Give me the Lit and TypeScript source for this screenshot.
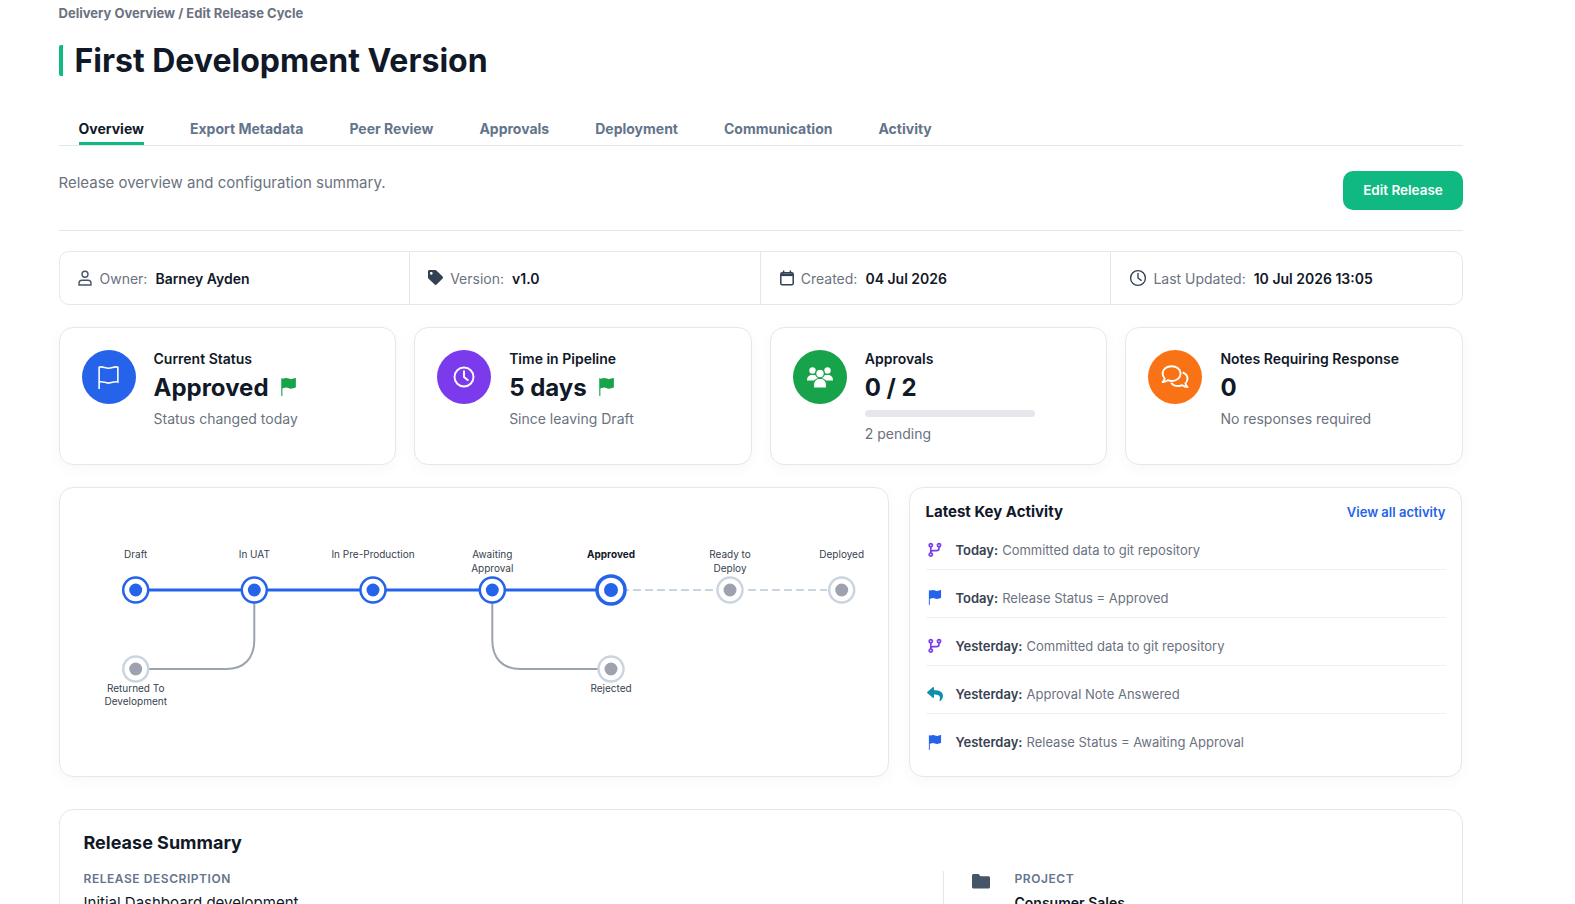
import { LitElement, html, css, svg } from 'lit';
import { customElement } from 'lit/decorators.js';

const FLAG_FILL = 'M14.778.085A.5.5 0 0 1 15 .5V8a.5.5 0 0 1-.314.464L14.5 8l.186.464-.003.001-.006.003-.023.009a12.435 12.435 0 0 1-.397.15c-.264.095-.631.223-1.047.35-.816.252-1.879.523-2.71.523-.847 0-1.548-.28-2.158-.525l-.028-.01C7.68 8.71 7.14 8.5 6.5 8.5c-.7 0-1.638.23-2.437.477A19.626 19.626 0 0 0 3 9.342V15.5a.5.5 0 0 1-1 0V.5a.5.5 0 0 1 1 0v.282c.226-.079.496-.17.79-.26C4.606.272 5.67 0 6.5 0c.84 0 1.524.277 2.121.519l.043.018C9.286.788 9.828 1 10.5 1c.7 0 1.638-.23 2.437-.477a19.587 19.587 0 0 0 1.349-.476l.019-.007.004-.002h.001z';

const flagFill = (color: string, size = 16) => html`
    <svg width=${size} height=${size} viewBox="0 0 16 16" fill=${color}><path d=${FLAG_FILL}></path></svg>`;

const branch = html`
    <svg width="16" height="16" viewBox="0 0 16 16" fill="none" stroke="#7c3aed" stroke-width="1.7">
        <circle cx="3.8" cy="3.3" r="1.6"></circle>
        <circle cx="3.8" cy="12.6" r="1.6"></circle>
        <circle cx="12" cy="3.3" r="1.6"></circle>
        <path d="M3.800 4.900v6.100M12 4.900v1.300c0 1.600-1 2.400-2.500 2.400H6c-1.200 0-2.200.6-2.200 1.800"></path>
    </svg>`;

const reply = html`
    <svg width="16" height="16" viewBox="0 0 512 512" fill="#0e8fb0"><path d="M8.309 189.836L184.313 37.851C199.719 24.546 224 35.347 224 56.015v80.053c160.629 1.839 288 34.032 288 186.258 0 61.441-39.581 122.309-83.333 154.132-13.653 9.931-33.111-2.533-28.077-18.631 45.344-145.012-21.507-183.51-176.59-185.742V360c0 20.7-24.3 31.453-39.687 18.164l-176.004-152c-11.071-9.562-11.086-26.753 0-36.328z"></path></svg>`;

const infoIcons = {
    user: html`<svg width="16" height="16" viewBox="0 0 16 16" fill="none" stroke="#475569" stroke-width="1.4">
        <circle cx="7" cy="4.200" r="3"></circle>
        <path d="M1 15v-1.800c0-1.700 1.400-3 3-3h6c1.600 0 3 1.300 3 3V15z"></path></svg>`,
    tag: html`<svg width="16" height="16" viewBox="0 0 546 546" fill="#334155"><path d="M0 252.118V48C0 21.49 21.49 0 48 0h204.118a48 48 0 0 1 33.941 14.059l211.882 211.882c18.745 18.745 18.745 49.137 0 67.882L293.823 497.941c-18.745 18.745-49.137 18.745-67.882 0L14.059 286.059A48 48 0 0 1 0 252.118zM112 64c-26.51 0-48 21.49-48 48s21.49 48 48 48 48-21.49 48-48-21.49-48-48-48z"></path></svg>`,
    calendar: html`<svg width="16" height="16" viewBox="0 0 16 16" fill="none" stroke="#334155" stroke-width="1.500">
        <rect x="1.800" y="2.800" width="12.400" height="12" rx="1.400"></rect>
        <path d="M1.800 4.800h12.400" stroke-width="2.600"></path>
        <path d="M4.600 .6v3M11.400 .6v3"></path></svg>`,
    clock: html`<svg width="18" height="18" viewBox="-0.5 -0.5 17 17" fill="none" stroke="#334155" stroke-width="1.300">
        <circle cx="8" cy="8" r="7"></circle>
        <path d="M8 3.600V8l3 2.200" stroke-linecap="round"></path></svg>`,
};

const cardIcons = {
    flag: html`<svg width="25" height="25" viewBox="0 0 16 16" fill="none" stroke="#fff" stroke-width="1">
        <path d="M2 15.400V1.400c2.200-.8 3.600.7 6 .7s3.800-1.500 6-.7v9.500c-2.200-.8-3.600.7-6 .7s-3.800-1.500-6-.7"></path></svg>`,
    clock: html`<svg width="22" height="22" viewBox="0 0 16 16" fill="none" stroke="#fff" stroke-width="1.400">
        <circle cx="8" cy="8" r="6.900"></circle>
        <path d="M8 3.800V8l2.700 2.200" stroke-linecap="round"></path></svg>`,
    users: html`<svg width="28" height="24" viewBox="0 0 28 24" fill="#fff">
        <circle cx="6.500" cy="5.500" r="3.200"></circle>
        <circle cx="21.500" cy="5.500" r="3.200"></circle>
        <path d="M1 15.400c0-3 1.800-5.400 4.600-5.400h16.800c2.800 0 4.600 2.400 4.600 5.400z"></path>
        <circle cx="14" cy="8.500" r="4.300" stroke="#16a34a" stroke-width="1.200"></circle>
        <path d="M7.500 23v-3.600c0-3.600 2.800-5.900 5.300-5.900h2.400c2.500 0 5.300 2.300 5.300 5.900V23z" stroke="#16a34a" stroke-width="1.200"></path></svg>`,
    comments: html`<svg width="30" height="26" viewBox="0 0 30 26" fill="none" stroke="#fff" stroke-width="1.900" stroke-linejoin="round">
        <path d="M11.600 2.200c-5 0-9 3.200-9 7.400 0 1.900.8 3.500 2.100 4.800-.3 1.500-1.200 2.800-2.100 3.600 2 0 3.900-.8 5.200-1.800 1.200.5 2.500.8 3.800.8 5 0 9-3.200 9-7.400s-4-7.400-9-7.400z"></path>
        <path d="M22.600 8.400c2.900 1.100 4.900 3.400 4.900 6.200 0 1.900-.8 3.500-2.100 4.800.3 1.500 1.200 2.800 2.100 3.600-2 0-3.900-.8-5.200-1.800-1.200.5-2.500.8-3.800.8-3.100 0-5.800-1.200-7.400-3.200"></path></svg>`,
};

interface Node { x: number; y: number; on?: boolean; current?: boolean; label: string[]; below?: boolean; }

// diagram is a free canvas, coords are relative to the svg (page x - 60, page y - 488)
const nodes: Node[] = [
    { x: 75.7, y: 102, on: true, label: ['Draft'] },
    { x: 194.3, y: 102, on: true, label: ['In UAT'] },
    { x: 313, y: 102, on: true, label: ['In Pre-Production'] },
    { x: 432.3, y: 102, on: true, label: ['Awaiting', 'Approval'] },
    { x: 551, y: 102, on: true, current: true, label: ['Approved'] },
    { x: 670, y: 102, label: ['Ready to', 'Deploy'] },
    { x: 781.7, y: 102, label: ['Deployed'] },
    { x: 75.7, y: 181, below: true, label: ['Returned To', 'Development'] },
    { x: 551, y: 181, below: true, label: ['Rejected'] },
];

const activity = [
    { icon: branch, when: 'Today:', text: 'Committed data to git repository' },
    { icon: flagFill('#2563eb', 15), when: 'Today:', text: 'Release Status = Approved' },
    { icon: branch, when: 'Yesterday:', text: 'Committed data to git repository' },
    { icon: reply, when: 'Yesterday:', text: 'Approval Note Answered' },
    { icon: flagFill('#2563eb', 15), when: 'Yesterday:', text: 'Release Status = Awaiting Approval' },
];

const tabs = ['Overview', 'Export Metadata', 'Peer Review', 'Approvals', 'Deployment', 'Communication', 'Activity'];

@customElement('app-root')
export class AppRoot extends LitElement {
    static styles = css`
        :host {
            display: block;
            height: 904px;
            overflow: hidden;
            box-sizing: border-box;
            padding: 0 112px 0 58.5px;
            background: #fff;
            font-family: Inter, "Liberation Sans", sans-serif;
            color: #111827;
        }
        .crumb {
            padding-top: 5px;
            font-size: 13px;
            line-height: 16px;
            font-weight: 700;
            color: #6b7280;
        }
        h1 {
            margin: 24px 0 0;
            padding-left: 12px;
            border-left: 4px solid #10b981;
            border-radius: 2px;
            font-size: 32px;
            line-height: 31px;
            font-weight: 700;
            color: #111827;
        }
        .tabs {
            display: flex;
            gap: 46px;
            margin-top: 35px;
            padding-left: 20px;
            border-bottom: 1px solid #e2e8f0;
        }
        .tab {
            height: 34px;
            box-sizing: border-box;
            padding-top: 9px;
            font-size: 14px;
            line-height: 18px;
            font-weight: 700;
            color: #64748b;
        }
        .tab.active {
            color: #111827;
            border-bottom: 3px solid #10b981;
        }
        .head {
            display: flex;
            justify-content: space-between;
            align-items: flex-start;
            height: 85px;
            padding-top: 25px;
            box-sizing: border-box;
            border-bottom: 1px solid #e2e8f0;
        }
        .head p {
            margin: 0;
            font-size: 15px;
            line-height: 24px;
            color: #6b7280;
        }
        .edit {
            width: 120px;
            height: 39px;
            padding: 0 0 2px;
            border: 0;
            border-radius: 10px;
            background: #10b981;
            color: #fff;
            font: 600 13.5px Inter, sans-serif;
        }
        .info {
            display: grid;
            grid-template-columns: repeat(4, 1fr);
            height: 54px;
            box-sizing: border-box;
            margin-top: 20px;
            border: 1px solid #e2e8f0;
            border-radius: 10px;
        }
        .info-cell {
            display: flex;
            align-items: center;
            padding-left: 18px;
            font-size: 14px;
            border-right: 1px solid #e2e8f0;
        }
        .info-cell:last-child { border-right: 0; }
        .info-cell svg { flex: none; margin-right: 6px; }
        .info-cell span { color: #6b7280; margin-right: 8px; }
        .info-cell b { font-weight: 600; color: #111827; }
        .cards {
            display: grid;
            grid-template-columns: repeat(4, 1fr);
            gap: 18px;
            margin-top: 22px;
        }
        .card {
            display: flex;
            gap: 18px;
            height: 138px;
            box-sizing: border-box;
            padding: 22px;
            background: #fff;
            border: 1px solid #e2e8f0;
            border-radius: 14px;
            box-shadow: 0 4px 16px rgba(15, 23, 42, 0.03);
        }
        .circle {
            flex: none;
            display: flex;
            align-items: center;
            justify-content: center;
            width: 54px;
            height: 54px;
            border-radius: 50%;
        }
        .blue { background: #2563eb; }
        .purple { background: #7c3aed; }
        .green { background: #16a34a; }
        .orange { background: #f97316; }
        .card-title {
            font-size: 14px;
            line-height: 18px;
            font-weight: 600;
        }
        .card-value {
            display: flex;
            align-items: center;
            gap: 10px;
            height: 36px;
            margin-top: 1px;
            font-size: 24px;
            font-weight: 700;
        }
        .card-sub {
            margin-top: 4px;
            font-size: 14px;
            line-height: 20px;
            color: #6b7280;
        }
        .progress {
            width: 170px;
            height: 7px;
            margin: 5px 0 7px;
            border-radius: 4px;
            background: #e5e7eb;
        }
        .progress + .card-sub { margin-top: 0; }
        .split {
            display: grid;
            grid-template-columns: 830px 553px;
            gap: 20px;
            margin-top: 22px;
        }
        .panel {
            height: 290px;
            box-sizing: border-box;
            background: #fff;
            border: 1px solid #e2e8f0;
            border-radius: 14px;
            box-shadow: 0 4px 16px rgba(15, 23, 42, 0.03);
        }
        .panel svg.flow { display: block; }
        .flow text {
            font-family: Inter, sans-serif;
            font-size: 10px;
            text-anchor: middle;
            fill: #374151;
        }
        .flow text.current { font-weight: 700; fill: #111827; }
        .activity { padding: 0 15px 0 16px; }
        .activity-head {
            display: flex;
            justify-content: space-between;
            align-items: center;
            height: 34px;
            padding-top: 12px;
            box-sizing: border-box;
        }
        .activity-head h3 {
            margin: 0;
            font-size: 15px;
            font-weight: 700;
        }
        .activity-head a {
            margin-top: 2px;
            font-size: 13px;
            font-weight: 600;
            color: #2563eb;
        }
        .row {
            display: flex;
            align-items: center;
            height: 48px;
            box-sizing: border-box;
            padding-top: 8px;
            border-bottom: 1px solid #eef1f5;
            font-size: 13px;
            color: #6b7280;
        }
        .row:last-child { border-bottom: 0; }
        .ico {
            flex: none;
            display: flex;
            justify-content: center;
            width: 16px;
            margin: 0 13px 0 1px;
        }
        .row b { font-weight: 600; color: #374151; margin-right: 4px; }
        .summary {
            margin-top: 32px;
            padding: 22px 24px;
            background: #fff;
            border: 1px solid #e2e8f0;
            border-radius: 14px;
        }
        .summary h2 {
            margin: 0;
            font-size: 18px;
            line-height: 22px;
            font-weight: 700;
        }
        .summary-grid {
            display: grid;
            grid-template-columns: 859px 1fr;
            margin-top: 17px;
        }
        .field-label {
            font-size: 12px;
            line-height: 16px;
            font-weight: 600;
            letter-spacing: 0.55px;
            color: #64748b;
        }
        .field-value {
            margin-top: 6px;
            font-size: 15px;
            line-height: 20px;
        }
        .project {
            display: flex;
            gap: 25px;
            padding-left: 28px;
            border-left: 1px solid #e2e8f0;
        }
        .project svg { margin-top: 2px; }
        .project .field-value { font-size: 14px; font-weight: 600; }
    `;

    private renderFlow() {
        const blue = '#2563eb';
        const grey = '#9ca3af';
        const pale = '#cbd5e1';
        return svg`
            <path d="M549 102H670M688 102H767" stroke=${pale} stroke-width="2" stroke-dasharray="8 4" fill="none"></path>
            <path d="M75.700 102H551" stroke=${blue} stroke-width="3" fill="none"></path>
            <path d="M194.300 115V152c0 18-10 29-28 29H89" stroke=${grey} stroke-width="2" fill="none"></path>
            <path d="M432.300 115V152c0 18 10 29 28 29H538" stroke=${grey} stroke-width="2" fill="none"></path>
            ${nodes.map((n) => {
                const r = n.current ? 14 : 12.5;
                const y0 = n.below ? n.y + 23 : 70;
                return svg`
                    <circle cx=${n.x} cy=${n.y} r=${r} fill="#fff"
                        stroke=${n.on ? blue : pale} stroke-width=${n.current ? 3.5 : 2.5}></circle>
                    <circle cx=${n.x} cy=${n.y} r=${n.current ? 7 : 6.5} fill=${n.on ? blue : grey}></circle>
                    ${n.label.map((line, i) => svg`
                        <text class=${n.current ? 'current' : ''} x=${n.x} y=${y0 + i * (n.below ? 13 : 14)}>${line}</text>`)}
                `;
            })}`;
    }

    render() {
        return html`
            <div class="crumb">Delivery Overview / Edit Release Cycle</div>
            <h1>First Development Version</h1>
            <div class="tabs">
                ${tabs.map((t, i) => html`<div class="tab ${i === 0 ? 'active' : ''}">${t}</div>`)}
            </div>
            <div class="head">
                <p>Release overview and configuration summary.</p>
                <button class="edit">Edit Release</button>
            </div>
            <div class="info">
                <div class="info-cell">${infoIcons.user}<span>Owner:</span><b>Barney Ayden</b></div>
                <div class="info-cell">${infoIcons.tag}<span>Version:</span><b>v1.0</b></div>
                <div class="info-cell">${infoIcons.calendar}<span>Created:</span><b>04 Jul 2026</b></div>
                <div class="info-cell">${infoIcons.clock}<span>Last Updated:</span><b>10 Jul 2026 13:05</b></div>
            </div>
            <div class="cards">
                <div class="card">
                    <div class="circle blue">${cardIcons.flag}</div>
                    <div>
                        <div class="card-title">Current Status</div>
                        <div class="card-value">Approved ${flagFill('#16a34a', 18)}</div>
                        <div class="card-sub">Status changed today</div>
                    </div>
                </div>
                <div class="card">
                    <div class="circle purple">${cardIcons.clock}</div>
                    <div>
                        <div class="card-title">Time in Pipeline</div>
                        <div class="card-value">5 days ${flagFill('#16a34a', 18)}</div>
                        <div class="card-sub">Since leaving Draft</div>
                    </div>
                </div>
                <div class="card">
                    <div class="circle green">${cardIcons.users}</div>
                    <div>
                        <div class="card-title">Approvals</div>
                        <div class="card-value">0 / 2</div>
                        <div class="progress"></div>
                        <div class="card-sub">2 pending</div>
                    </div>
                </div>
                <div class="card">
                    <div class="circle orange">${cardIcons.comments}</div>
                    <div>
                        <div class="card-title">Notes Requiring Response</div>
                        <div class="card-value">0</div>
                        <div class="card-sub">No responses required</div>
                    </div>
                </div>
            </div>
            <div class="split">
                <div class="panel">
                    <svg class="flow" width="828" height="288" viewBox="0 0 828 288">${this.renderFlow()}</svg>
                </div>
                <div class="panel activity">
                    <div class="activity-head">
                        <h3>Latest Key Activity</h3>
                        <a>View all activity</a>
                    </div>
                    ${activity.map((a) => html`
                        <div class="row"><span class="ico">${a.icon}</span><b>${a.when}</b>${a.text}</div>`)}
                </div>
            </div>
            <div class="summary">
                <h2>Release Summary</h2>
                <div class="summary-grid">
                    <div>
                        <div class="field-label">RELEASE DESCRIPTION</div>
                        <div class="field-value">Initial Dashboard development</div>
                    </div>
                    <div class="project">
                        <svg width="18" height="16" viewBox="0 0 18 16" fill="#475569"><path d="M1.500 1h5l2 2.200h8c.8 0 1.500.7 1.500 1.500v9.300c0 .8-.7 1.500-1.500 1.500h-15C.7 15.500 0 14.800 0 14V2.500C0 1.700.7 1 1.500 1z"></path></svg>
                        <div>
                            <div class="field-label">PROJECT</div>
                            <div class="field-value">Consumer Sales</div>
                        </div>
                    </div>
                </div>
            </div>
        `;
    }
}
